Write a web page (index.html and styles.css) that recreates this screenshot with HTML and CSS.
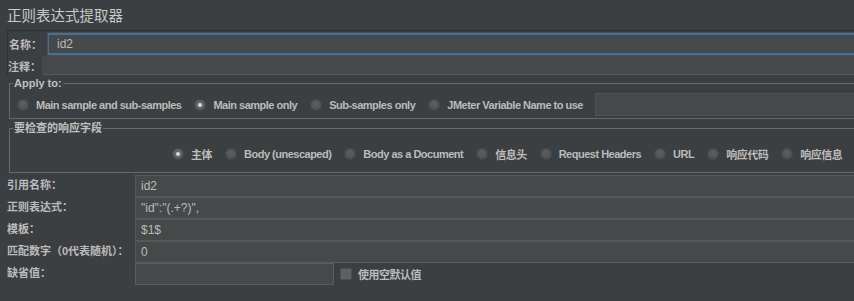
FILE: index.html
```html
<!DOCTYPE html>
<html lang="zh-CN">
<head>
  <meta charset="UTF-8">
  <meta name="viewport" content="width=device-width, initial-scale=1.0">
  <title>正则表达式提取器</title>
  <link rel="stylesheet" href="styles.css">
</head>
<body>
  <div class="page">
    <div class="title">正则表达式提取器</div>

    <div class="name-panel">
      <div class="row name-row">
        <span class="label">名称：</span>
        <div class="field focus">id2</div>
      </div>
      <div class="row comment-row">
        <span class="label">注释：</span>
        <div class="field"></div>
      </div>
    </div>

    <fieldset class="group apply-group">
      <legend>Apply to:</legend>
      <div class="radios">
        <span class="opt"><i class="radio"></i>Main sample and sub-samples</span>
        <span class="opt"><i class="radio on"></i>Main sample only</span>
        <span class="opt"><i class="radio"></i>Sub-samples only</span>
        <span class="opt"><i class="radio"></i>JMeter Variable Name to use</span>
        <div class="field var-field"></div>
      </div>
    </fieldset>

    <fieldset class="group check-group">
      <legend>要检查的响应字段</legend>
      <div class="radios fields">
        <span class="opt"><i class="radio on"></i>主体</span>
        <span class="opt"><i class="radio"></i>Body (unescaped)</span>
        <span class="opt"><i class="radio"></i>Body as a Document</span>
        <span class="opt"><i class="radio"></i>信息头</span>
        <span class="opt"><i class="radio"></i>Request Headers</span>
        <span class="opt"><i class="radio"></i>URL</span>
        <span class="opt"><i class="radio"></i>响应代码</span>
        <span class="opt"><i class="radio"></i>响应信息</span>
      </div>
    </fieldset>

    <div class="form">
      <span class="label">引用名称：</span>
      <div class="field">id2</div>
      <span class="label">正则表达式：</span>
      <div class="field">"id":"(.+?)",</div>
      <span class="label">模板：</span>
      <div class="field">$1$</div>
      <span class="label">匹配数字（0代表随机）：</span>
      <div class="field">0</div>
      <span class="label">缺省值：</span>
      <div class="default-row">
        <div class="field short"></div>
        <span class="opt check-opt"><i class="checkbox"></i>使用空默认值</span>
      </div>
    </div>
  </div>
</body>
</html>
```

FILE: styles.css
```css
html, body {
  margin: 0;
  padding: 0;
  background: #3c3f41;
  overflow: hidden;
}

.page {
  width: 880px;
  height: 301px;
  color: #bbbbbb;
  font-family: "Liberation Sans", "Noto Sans CJK SC", sans-serif;
  font-size: 11px;
  font-weight: bold;
}

.title {
  height: 30px;
  padding-left: 7px;
  line-height: 33px;
  font-size: 14.5px;
  font-weight: normal;
  color: #c8c8c8;
  box-sizing: border-box;
}

/* 名称 / 注释 */
.name-panel {
  margin-left: 7px;
  border-top: 1px solid #2f3133;
  border-left: 1px solid #2f3133;
}

.row {
  display: flex;
  align-items: center;
}

.name-row {
  height: 23px;
  margin-top: 1px;
}

.name-row .label {
  width: 39px;
  padding-left: 1px;
}

.comment-row {
  height: 19px;
  margin-top: 1px;
}

.comment-row .label {
  width: 34px;
}

.field {
  flex: 1;
  box-sizing: border-box;
  height: 22px;
  line-height: 20px;
  padding-left: 5px;
  background: #45494a;
  border: 1px solid #55595b;
  color: #bbbbbb;
  font-weight: normal;
  font-size: 12px;
}

.name-row .field {
  height: 22px;
  line-height: 18px;
  padding-left: 8px;
  border: 2px solid #4f6c93;
  border-left-width: 1px;
  box-shadow: 0 0 0 1px #3f5167;
}

.comment-row .field {
  height: 19px;
  border-color: #45494a;
  border-bottom-color: #54585a;
}

/* 分组 */
.group {
  margin: 0 0 0 9px;
  padding: 0;
  border: 1px solid #66696b;
  border-right: none;
  min-width: 0;
}

.group legend {
  margin-left: 3px;
  padding: 0 1px;
  line-height: 12px;
  color: #c0c0c0;
}

.apply-group {
  margin-top: 2px;
  padding-bottom: 2px;
}

.apply-group .radios {
  padding-left: 7px;
  height: 23px;
  margin-top: 4px;
}

.check-group {
  margin-top: 3px;
  padding-bottom: 11px;
}

.check-group .radios {
  padding-left: 162px;
  height: 14px;
  margin-top: 13px;
}

.radios {
  display: flex;
  align-items: center;
}

.opt {
  display: inline-flex;
  align-items: center;
  margin-right: 13px;
  letter-spacing: -0.5px;
  white-space: nowrap;
}

.radio {
  width: 12px;
  height: 12px;
  margin-right: 7px;
  border-radius: 50%;
  background: radial-gradient(circle at 50% 40%, #5c5f61, #484b4d);
  box-shadow: inset 0 0 0 1px #424446;
  position: relative;
}

.radio.on {
  background: radial-gradient(circle at 50% 45%, #6a6d6f, #505355);
}

.radio.on::after {
  content: "";
  position: absolute;
  left: 4px;
  top: 4px;
  width: 4px;
  height: 4px;
  border-radius: 50%;
  background: #d6d6d6;
}

.var-field {
  margin-left: -1px;
  height: 23px;
  border-color: #4f5355;
}

/* 下方表单 */
.form {
  display: grid;
  grid-template-columns: 128px 1fr;
  grid-auto-rows: 22px;
  margin: 2px 0 0 7px;
}

.form .label {
  padding-top: 2px;
  line-height: 16px;
  white-space: nowrap;
}

.form .field {
  height: 22px;
}

.default-row {
  display: flex;
  align-items: center;
}

.default-row .field.short {
  flex: none;
  width: 199px;
  border-color: #595c5e;
}

.check-opt {
  margin-left: 6px;
}

.checkbox {
  width: 12px;
  height: 12px;
  margin-right: 6px;
  box-sizing: border-box;
  background: #5e6163;
  border: 1px solid #4a4d4f;
}
```
